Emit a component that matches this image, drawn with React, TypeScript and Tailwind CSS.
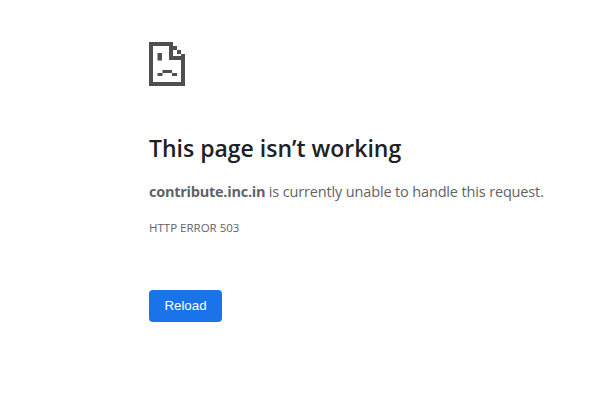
export default function App() {
  return (
    <div className="min-h-[400px] bg-white pl-[149px] pt-[42px] font-['Open_Sans','Noto_Sans',sans-serif]">
      <svg width="37" height="44" viewBox="0 0 37 44" className="block" fill="#4f4f4f">
        <path d="M0 0H24V4H4V40H32V18H20V4H24V14H36V44H0Z" />
        <rect x="24" y="4" width="4" height="4" />
        <rect x="28" y="8" width="4" height="4" />
        <rect x="32" y="12" width="4" height="4" />
        <rect x="8.5" y="11" width="4.5" height="7.5" />
        <rect x="13.5" y="28" width="9.5" height="3" />
        <rect x="8.5" y="31" width="5" height="3" />
        <rect x="23" y="31" width="5" height="3" />
      </svg>
      <h1 className="mt-[46px] text-[23px] leading-[32px] font-semibold text-[#202124]">This page isn’t working</h1>
      <p className="mt-[16px] text-[14.5px] leading-[24px] tracking-[-0.15px] text-[#5f6368]"><span className="font-bold tracking-[-0.25px]">contribute.inc.in</span> is currently unable to handle this request.</p>
      <p className="mt-[16px] text-[11.5px] leading-[16px] text-[#5f6368]">HTTP ERROR 503</p>
      <button className="mt-[54px] block h-[32px] w-[73px] rounded-[4px] bg-[#1a73e8] font-['Liberation_Sans',sans-serif] text-[13.33px] text-white">Reload</button>
    </div>
  );
}
